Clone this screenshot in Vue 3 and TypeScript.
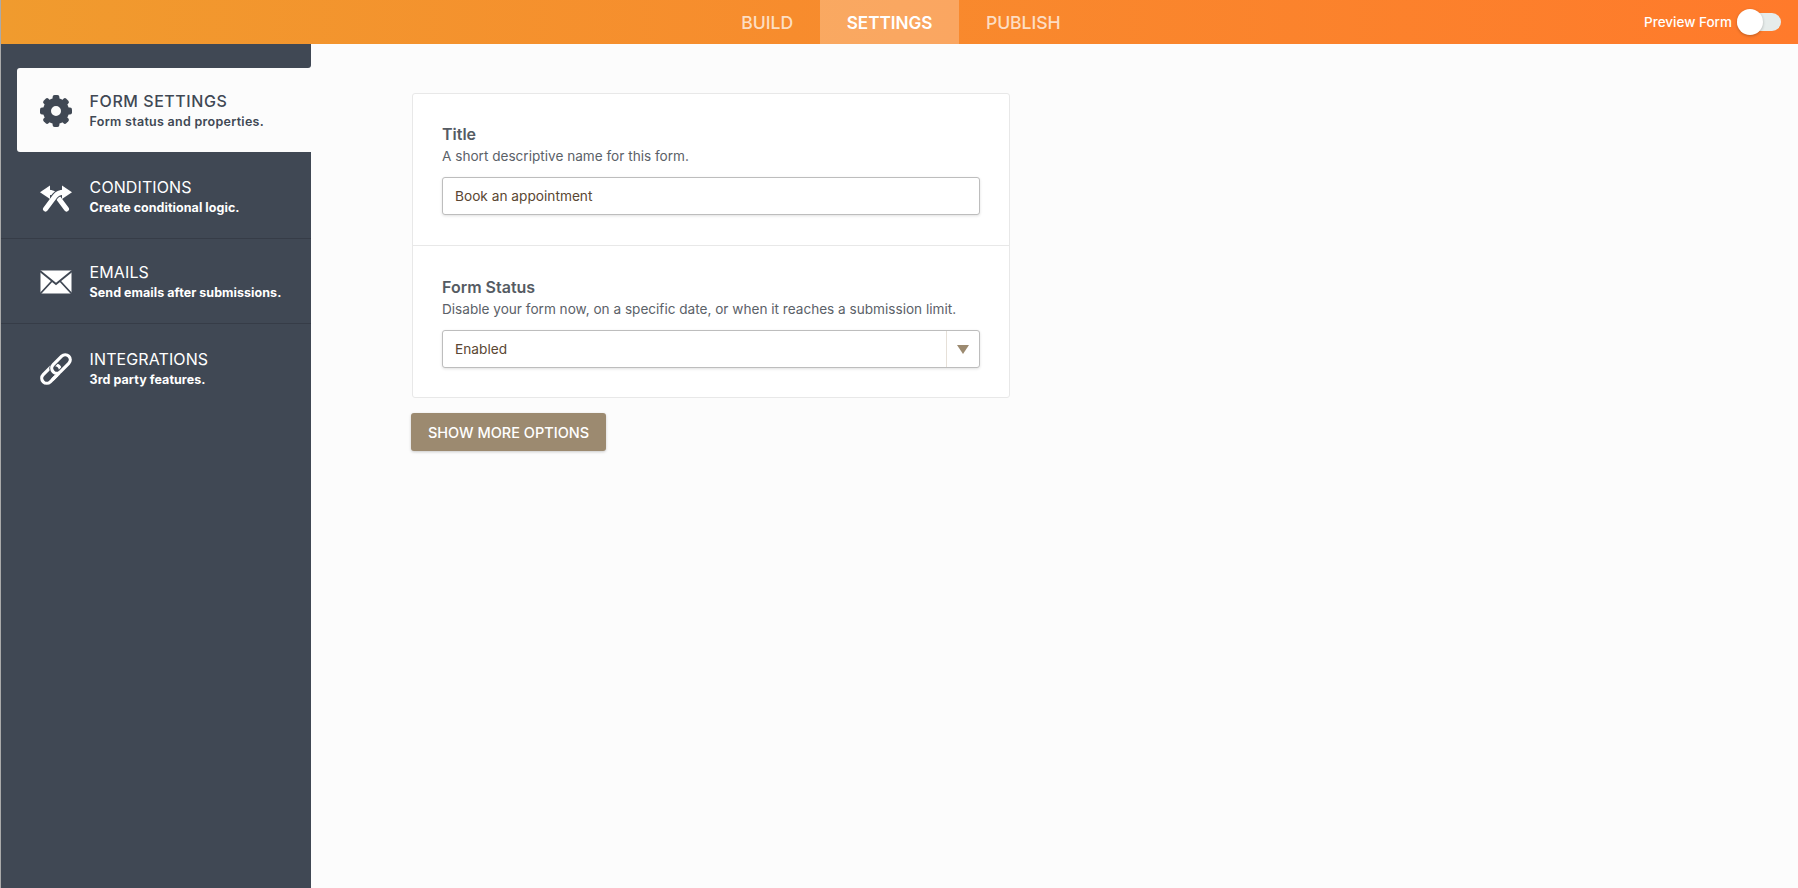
<script setup lang="ts">
const items = [
  { id: 'gear', title: 'FORM SETTINGS', sub: 'Form status and properties.', active: true },
  { id: 'cond', title: 'CONDITIONS', sub: 'Create conditional logic.', active: false },
  { id: 'mail', title: 'EMAILS', sub: 'Send emails after submissions.', active: false },
  { id: 'link', title: 'INTEGRATIONS', sub: '3rd party features.', active: false },
]
const tabs = [
  { label: 'BUILD', active: false },
  { label: 'SETTINGS', active: true },
  { label: 'PUBLISH', active: false },
]
const teeth = [0, 45, 90, 135, 180, 225, 270, 315]
</script>

<template>
  <div class="page">
    <header class="topbar">
      <div class="spacer"></div>
      <nav class="tabs">
        <a v-for="t in tabs" :key="t.label" class="tab" :class="{ on: t.active }">{{ t.label }}</a>
      </nav>
      <div class="preview">
        <span>Preview Form</span>
        <span class="switch"><span class="knob"></span></span>
      </div>
    </header>
    <div class="body">
      <aside class="side">
        <div class="cap"></div>
        <div v-for="it in items" :key="it.id" class="row" :class="{ active: it.active }">
          <div class="item">
            <svg v-if="it.id === 'gear'" class="ico" viewBox="0 0 32 32">
              <rect v-for="a in teeth" :key="a" x="12.6" y="0" width="6.8" height="10" rx="2" fill="#404854" :transform="`rotate(${a} 16 16)`" />
              <circle cx="16" cy="16" r="9" fill="none" stroke="#404854" stroke-width="8" />
            </svg>
            <svg v-else-if="it.id === 'cond'" class="ico" viewBox="0 0 32 32">
              <path d="M8 11.2 Q14 11.2 17 15.2 L26.5 28" fill="none" stroke="#fff" stroke-width="5" stroke-linecap="round" />
              <path d="M24 11.2 Q18 11.2 15 15.2 L5.5 28" fill="none" stroke="#404854" stroke-width="7" />
              <path d="M24 11.2 Q18 11.2 15 15.2 L5.5 28" fill="none" stroke="#fff" stroke-width="5" stroke-linecap="round" />
              <path d="M10 4.5 L0 11.2 L10 18 Z" fill="#fff" />
              <path d="M22 4.5 L32 11.2 L22 18 Z" fill="#fff" />
            </svg>
            <svg v-else-if="it.id === 'mail'" class="ico" viewBox="0 0 32 32">
              <rect x="0.5" y="4.5" width="31" height="23" fill="#fff" />
              <path d="M0 5 L16 18 L32 5 M0 28 L12 15 M32 28 L20 15" fill="none" stroke="#404854" stroke-width="1.8" />
            </svg>
            <svg v-else class="ico" viewBox="0 0 32 32">
              <g fill="none">
                <rect x="6" y="10" width="10" height="22" rx="5" stroke="#fff" stroke-width="3.2" transform="rotate(45 11 21)" />
                <rect x="16" y="0" width="10" height="22" rx="5" stroke="#404854" stroke-width="5" transform="rotate(45 21 11)" />
                <rect x="16" y="0" width="10" height="22" rx="5" stroke="#fff" stroke-width="3.2" transform="rotate(45 21 11)" />
                <path d="M16 14 V24" stroke="#fff" stroke-width="3.2" transform="rotate(45 11 21)" />
              </g>
            </svg>
            <div class="txt">
              <div class="ttl">{{ it.title }}</div>
              <div class="sub">{{ it.sub }}</div>
            </div>
          </div>
        </div>
        <div class="fill"></div>
      </aside>
      <main class="main">
        <section class="card">
          <div class="group first">
            <label class="lbl">Title</label>
            <p class="desc">A short descriptive name for this form.</p>
            <div class="field">Book an appointment</div>
          </div>
          <div class="group">
            <label class="lbl">Form Status</label>
            <p class="desc">Disable your form now, on a specific date, or when it reaches a submission limit.</p>
            <div class="field select">
              <span class="val">Enabled</span>
              <span class="caret"><i></i></span>
            </div>
          </div>
        </section>
        <button class="more" type="button">SHOW MORE OPTIONS</button>
      </main>
    </div>
  </div>
</template>

<style>
html, body { margin: 0; background: #fcfcfc; }
</style>

<style scoped>
.page {
  width: 1798px;
  height: 888px;
  display: flex;
  flex-direction: column;
  overflow: hidden;
  font-family: Inter, "Liberation Sans", sans-serif;
  background: #fcfcfc;
}
.topbar {
  height: 44px;
  flex: none;
  display: grid;
  grid-template-columns: 1fr auto 1fr;
  background: linear-gradient(90deg, #f09b2e 0%, #f88a2d 50%, #ff7a2b 100%);
  border-left: 1px solid #aaa;
}
.tabs { display: flex; margin-left: 3px; }
.tab {
  height: 44px;
  padding: 0 26.5px;
  display: flex;
  align-items: center;
  font-size: 17.6px;
  font-weight: 500;
  letter-spacing: -0.05px;
  color: rgba(255, 255, 255, 0.72);
}
.tab.on {
  padding: 0 27px;
  background: rgba(255, 255, 255, 0.25);
  color: #fff;
  font-size: 17.2px;
  font-weight: 600;
}
.preview {
  display: flex;
  justify-content: flex-end;
  align-items: center;
  gap: 5px;
  padding-right: 17px;
  font-size: 13.5px;
  font-weight: 500;
  color: #fff;
}
.switch {
  width: 44px;
  height: 18px;
  border-radius: 9px;
  background: #e6eceb;
  display: flex;
  align-items: center;
}
.knob {
  width: 26px;
  height: 26px;
  border-radius: 50%;
  background: #fff;
  box-shadow: 0 1px 3px rgba(0, 0, 0, 0.25);
}
.body { flex: 1; display: flex; min-height: 0; }
.side {
  width: 311px;
  flex: none;
  display: flex;
  flex-direction: column;
  border-left: 1px solid #aaa;
  box-sizing: border-box;
}
.cap {
  height: 24px;
  background: #404854;
  border-bottom-right-radius: 3px;
}
.fill { flex: 1; background: #404854; }
.row {
  height: 85px;
  box-sizing: border-box;
  background: #404854;
  border-bottom: 1px solid #363c47;
  display: flex;
}
.row.active { height: 84px; padding-left: 16px; border-bottom: 0; }
.row.active + .row { height: 87px; padding-top: 2px; }
.row:nth-last-child(2) { height: 87px; padding-top: 2px; border-bottom: 0; }
.item {
  flex: 1;
  display: flex;
  align-items: center;
  gap: 17.6px;
  padding-left: 39px;
  color: #fff;
}
.row.active .item {
  padding-left: 23px;
  background: #fcfcfc;
  color: #404854;
  border-radius: 3px 0 0 3px;
}
.ico { width: 32px; height: 32px; flex: none; margin-top: 1px; }
.txt { margin-top: 2px; }
.ttl {
  font-size: 16px;
  line-height: 20px;
  font-weight: 400;
  letter-spacing: 0.1px;
}
.row.active .ttl { font-weight: 500; letter-spacing: 0.55px; }
.sub {
  font-size: 12.5px;
  line-height: 21px;
  font-weight: 700;
  letter-spacing: 0.05px;
}
.row.active .sub { font-weight: 600; letter-spacing: 0.28px; }
.main {
  flex: 1;
  padding: 49px 0 0 100px;
  display: flex;
  flex-direction: column;
  align-items: flex-start;
}
.card {
  box-sizing: border-box;
  width: 598px;
  margin-left: 1px;
  background: #fff;
  border: 1px solid #e8e8e8;
  border-radius: 3px;
}
.group {
  padding: 31px 29px 29px 29px;
}
.group.first {
  height: 152px;
  box-sizing: border-box;
  padding-top: 30px;
  border-bottom: 1px solid #e8e8e8;
}
.lbl {
  display: block;
  font-size: 16px;
  line-height: 20px;
  font-weight: 600;
  color: #555b63;
  margin-bottom: 3px;
}
.desc {
  margin: 0 0 12px;
  font-size: 13.6px;
  line-height: 18px;
  color: #5b6168;
}
.field {
  box-sizing: border-box;
  height: 38px;
  width: 538px;
  border: 1px solid #bdbdbd;
  border-radius: 3px;
  padding-left: 12px;
  display: flex;
  align-items: center;
  font-size: 13.7px;
  color: #5a4632;
  background: #fff;
  box-shadow: 0 1px 3px rgba(0, 0, 0, 0.12);
}
.val { flex: 1; }
.caret {
  width: 32px;
  height: 100%;
  border-left: 1px solid #e6e0d8;
  display: flex;
  align-items: center;
  justify-content: center;
}
.caret i {
  display: block;
  width: 0;
  height: 0;
  border-left: 6px solid transparent;
  border-right: 6px solid transparent;
  border-top: 9px solid #9c8a70;
}
.more {
  margin-top: 15px;
  width: 195px;
  height: 38px;
  padding: 0;
  border: 0;
  border-radius: 3px;
  background: #9c8a70;
  color: #fff;
  font-family: inherit;
  font-size: 14.5px;
  font-weight: 500;
  box-shadow: 0 1px 3px rgba(0, 0, 0, 0.2);
}
</style>
